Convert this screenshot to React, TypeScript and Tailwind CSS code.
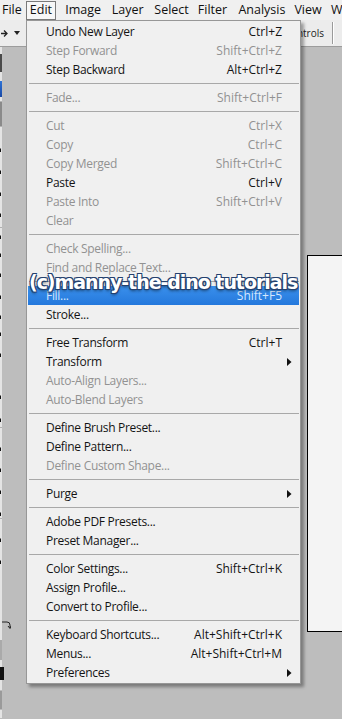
import React from "react";

type Item = {
  label: string;
  keys?: string;
  off?: boolean;
  sub?: boolean;
  hot?: boolean;
};

const groups: Item[][] = [
  [
    { label: "Undo New Layer", keys: "Ctrl+Z" },
    { label: "Step Forward", keys: "Shift+Ctrl+Z", off: true },
    { label: "Step Backward", keys: "Alt+Ctrl+Z" },
  ],
  [{ label: "Fade...", keys: "Shift+Ctrl+F", off: true }],
  [
    { label: "Cut", keys: "Ctrl+X", off: true },
    { label: "Copy", keys: "Ctrl+C", off: true },
    { label: "Copy Merged", keys: "Shift+Ctrl+C", off: true },
    { label: "Paste", keys: "Ctrl+V" },
    { label: "Paste Into", keys: "Shift+Ctrl+V", off: true },
    { label: "Clear", off: true },
  ],
  [
    { label: "Check Spelling...", off: true },
    { label: "Find and Replace Text...", off: true },
  ],
  [
    { label: "Fill...", keys: "Shift+F5", hot: true },
    { label: "Stroke..." },
  ],
  [
    { label: "Free Transform", keys: "Ctrl+T" },
    { label: "Transform", sub: true },
    { label: "Auto-Align Layers...", off: true },
    { label: "Auto-Blend Layers", off: true },
  ],
  [
    { label: "Define Brush Preset..." },
    { label: "Define Pattern..." },
    { label: "Define Custom Shape...", off: true },
  ],
  [{ label: "Purge", sub: true }],
  [{ label: "Adobe PDF Presets..." }, { label: "Preset Manager..." }],
  [
    { label: "Color Settings...", keys: "Shift+Ctrl+K" },
    { label: "Assign Profile..." },
    { label: "Convert to Profile..." },
  ],
  [
    { label: "Keyboard Shortcuts...", keys: "Alt+Shift+Ctrl+K" },
    { label: "Menus...", keys: "Alt+Shift+Ctrl+M" },
    { label: "Preferences", sub: true },
  ],
];

const menus = [
  { name: "Image", w: "w-[47px]" },
  { name: "Layer", w: "w-[43px]" },
  { name: "Select", w: "w-[44px]" },
  { name: "Filter", w: "w-[41px]" },
  { name: "Analysis", w: "w-[56px]" },
  { name: "View", w: "w-[37px]" },
  { name: "W", w: "w-[20px]" },
];

// tiny flyout arrows on the tools strip
const toolMarks = [148, 170, 192, 213, 235, 253, 273, 295, 315, 332, 353, 395, 418, 447, 468, 490, 512, 538, 560];

function Arrow() {
  return (
    <svg width="5" height="8" viewBox="0 0 5 8" className="block">
      <path d="M0 0 L4.5 4 L0 8 Z" fill="#111" />
    </svg>
  );
}

function MenuRow({ item }: { item: Item }) {
  const color = item.hot
    ? "text-[#d6e8ff]"
    : item.off
    ? "text-[#929292]"
    : "text-[#141414]";
  return (
    <div
      className={`flex h-[19px] items-center pl-[18px] pr-[17px] mx-[1px] ${
        item.hot ? "bg-gradient-to-b from-[#3a90ec] to-[#2478dc]" : ""
      } ${color}`}
    >
      <span className="flex-1 whitespace-nowrap tracking-[-0.3px]">{item.label}</span>
      {item.keys && <span className="whitespace-nowrap">{item.keys}</span>}
      {item.sub && (
        <span className="-mr-[10px]">
          <Arrow />
        </span>
      )}
    </div>
  );
}

export default function App() {
  return (
    <div className="relative w-[342px] h-[719px] overflow-hidden bg-[#bdbdbd] font-['Open_Sans',sans-serif] text-[12px] leading-none">
      {/* Menu bar */}
      <div className="flex h-[20px] items-center bg-[#f0f0f0] text-[#111] text-[12.5px]">
        <div className="w-[26px] pl-[2px]">File</div>
        <div className="flex h-[19px] w-[31px] items-center justify-center border border-[#7a7a7a] bg-[#f7f7f7]">
          Edit
        </div>
        {menus.map((m) => (
          <div key={m.name} className={`${m.w} pl-[9px] whitespace-nowrap`}>
            {m.name}
          </div>
        ))}
      </div>

      {/* Options bar */}
      <div className="flex h-[27px] items-center bg-[#ececec] border-b border-[#9c9c9c]">
        <div className="flex items-center gap-[6px] pl-[1px] w-[26px]">
          <svg width="7" height="9" viewBox="0 0 7 9">
            <path d="M0 4.5 H6 M3 1.5 L6 4.5 L3 7.5" stroke="#222" strokeWidth="1.3" fill="none" />
          </svg>
          <svg width="6" height="4" viewBox="0 0 6 4">
            <path d="M0 0 H6 L3 4 Z" fill="#222" />
          </svg>
        </div>
        <div className="ml-auto flex items-center">
          <span className="text-[10px] text-[#222] whitespace-nowrap">ntrols</span>
          <div className="ml-[8px] mr-[8px] h-[22px] w-[2px] border-l border-[#9a9a9a] border-r border-r-white" />
        </div>
      </div>

      {/* Workspace */}
      <div className="flex h-[671px]">
        {/* Tools panel */}
        <div className="relative w-[12px] bg-[#e4e4e4]">
          <div className="mt-[7px] h-[18px] bg-[#4a4a4a]" />
          <div className="mt-[9px] h-[16px] bg-gradient-to-b from-[#2f73d6] to-[#1848a6]" />
          <div className="mt-[4px] h-[26px] rounded-[2px] border border-[#8a8a8a] bg-[#f3f3f3]" />
          {toolMarks.map((y) => (
            <div
              key={y}
              className="absolute right-[1px] h-0 w-0 border-l-[4px] border-l-transparent border-b-[4px] border-b-[#111]"
              style={{ top: y - 47 }}
            />
          ))}
          <div className="absolute left-0 right-0 top-[180px] h-px bg-[#b0b0b0]" />
          <div className="absolute left-0 right-0 top-[380px] h-px bg-[#b0b0b0]" />
          <div className="absolute left-0 right-0 top-[471px] h-px bg-[#b0b0b0]" />
          <svg width="10" height="10" viewBox="0 0 10 10" className="absolute left-[1px] top-[572px]">
            <path d="M1 3 H6 Q9 3 9 6 V9 M7 7 L9 9.5 L10 7" stroke="#222" strokeWidth="1" fill="none" />
          </svg>
          <div className="absolute left-0 right-0 top-[593px] h-[20px] border border-[#aaa] bg-white" />
          <div className="absolute left-0 w-[4px] top-[620px] h-[13px] bg-[#111]" />
          <div className="absolute left-0 right-[1px] top-[643px] h-[20px] rounded-[2px] border border-[#9a9a9a] bg-[#e9e9e9]" />
        </div>
        <div className="w-[3px] bg-[#4b4b4b]" />
        <div className="w-[11px] bg-[#a9a9a9]" />
        <div className="flex-1 pl-[305px] pt-[208px]">
          <div className="h-[377px] w-[40px] border border-black bg-[#f4f4f4]" />
        </div>
      </div>

      {/* Edit dropdown */}
      <div className="absolute left-[26px] top-[20px] w-[275px] border border-[#979797] bg-[#f0f0f0] py-[1px] shadow-[3px_3px_3px_rgba(0,0,0,0.35)]">
        {groups.map((g, gi) => (
          <div key={gi}>
            {gi > 0 && (
              <div className="h-[9px] pt-[4px] pl-[2px] pr-[1px]">
                <div className="h-px bg-[#a8a8a8]" />
              </div>
            )}
            {g.map((it) => (
              <MenuRow key={it.label} item={it} />
            ))}
          </div>
        ))}
      </div>

      {/* Watermark */}
      <div className="absolute left-[29px] top-[273px] whitespace-nowrap font-['DejaVu_Sans',sans-serif] text-[19px] font-bold tracking-[-1.05px] text-white [text-shadow:1px_1px_0_#24406e,-1px_-1px_0_#24406e,1px_-1px_0_#24406e,-1px_1px_0_#24406e,0_2px_3px_rgba(0,0,0,0.5)]">
        (c)manny-the-dino tutorials
      </div>
    </div>
  );
}
